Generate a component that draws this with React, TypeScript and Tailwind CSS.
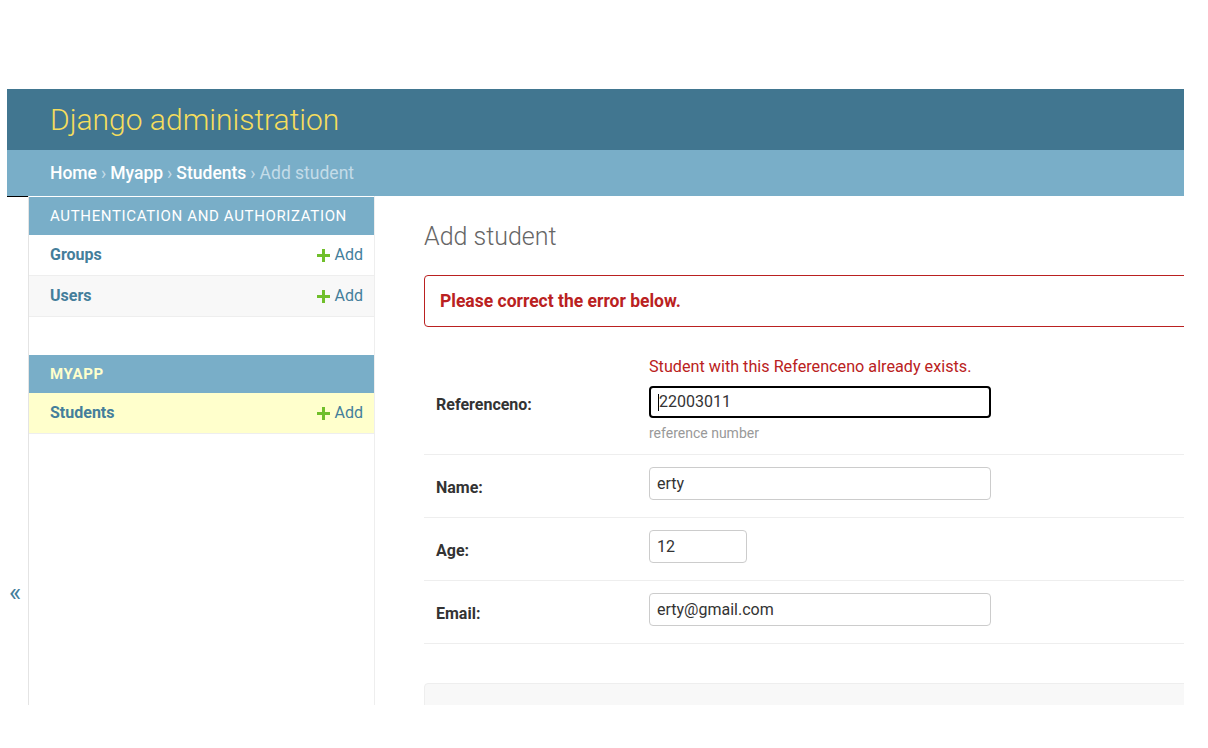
import React from "react";

const AddLink = () => (
  <span className="flex items-center gap-[5px] text-[16px] text-[#447e9b]">
    <svg width="13" height="13" viewBox="0 0 13 13">
      <path d="M5 0h3v5h5v3H8v5H5V8H0V5h5z" fill="#70bf2b" />
    </svg>
    Add
  </span>
);

const SideRow = ({ label, shade }: { label: string; shade?: string }) => (
  <div
    className={`h-[41px] flex items-center justify-between pl-[21px] pr-[11px] border-b border-[#eee] ${shade ?? "bg-white"}`}
  >
    <span className="text-[16px] font-bold text-[#447e9b]">{label}</span>
    <AddLink />
  </div>
);

const FormRow = ({
  label,
  value,
  short,
  focused,
  error,
  help,
}: {
  label: string;
  value: string;
  short?: boolean;
  focused?: boolean;
  error?: string;
  help?: string;
}) => (
  <div
    className={`flex items-center border-b border-[#eee] pl-[12px] ${
      error ? "pt-[12px] pb-[10px]" : "pt-[12px] pb-[17px]"
    }`}
  >
    <label className={`w-[213px] text-[16px] font-bold text-[#333] ${error ? "mt-[7px]" : "mt-[8px]"}`}>
      {label}
    </label>
    <div className="flex flex-col">
      {error && (
        <div className="text-[16.2px] text-[#ba2121] mb-[7px] -mt-[4px]">{error}</div>
      )}
      <div
        className={`flex items-center rounded-[4px] pl-[7px] text-[16px] text-[#333] ${
          short ? "w-[98px]" : "w-[342px]"
        } ${focused ? "h-[32px] border-2 border-black pl-[6px]" : "h-[33px] border border-[#ccc]"}`}
      >
        {focused && <span className="w-px h-[17px] bg-black" />}
        {value}
      </div>
      {help && <div className="text-[14px] text-[#999] mt-[5px]">{help}</div>}
    </div>
  </div>
);

export default function App() {
  return (
    <div className="bg-white w-[1208px] h-[748px] pt-[89px] pl-[7px] font-['Roboto',sans-serif]">
      <div className="w-[1177px] h-[616px] overflow-hidden flex flex-col">
        <div className="h-[61px] shrink-0 bg-[#417690] pl-[43px] flex items-center">
          <span className="text-[30px] font-light text-[#f5dd5d]">Django administration</span>
        </div>
        <div className="h-[46px] shrink-0 bg-[#79aec8] pl-[43px] pt-[1px] flex items-center text-[17.5px] font-medium text-white">
          Home<span className="mx-[4px] text-[#c4dce8] font-normal">›</span>Myapp
          <span className="mx-[4px] text-[#c4dce8] font-normal">›</span>Students
          <span className="mx-[4px] text-[#c4dce8] font-normal">›</span>
          <span className="text-[#c4dce8] font-normal">Add student</span>
        </div>
        <div className="flex flex-1 min-h-0">
          <div className="w-[22px] shrink-0 border-r border-[#e4e4e4] flex flex-col">
            <div className="h-[1px] bg-black" />
            <div className="pt-[380px] pl-[2px] text-[#447e9b] text-[26px] leading-[30px]">«</div>
          </div>
          <div className="w-[346px] shrink-0 border-r border-[#eee] pt-[1px]">
            <div className="h-[38px] bg-[#79aec8] pl-[21px] flex items-center text-[15px] tracking-[0.65px] text-white">
              AUTHENTICATION AND AUTHORIZATION
            </div>
            <SideRow label="Groups" />
            <SideRow label="Users" shade="bg-[#f8f8f8]" />
            <div className="h-[38px]" />
            <div className="h-[38px] bg-[#79aec8] pl-[21px] flex items-center text-[15px] font-bold tracking-[0.65px] text-[#ffffcc]">
              MYAPP
            </div>
            <SideRow label="Students" shade="bg-[#ffffcc]" />
          </div>
          <div className="w-[850px] shrink-0 pl-[49px] pt-[25px]">
            <h1 className="text-[25px] font-light text-[#666] leading-[32px]">Add student</h1>
            <div className="mt-[22px] h-[52px] border border-[#ba2121] rounded-[4px] pl-[15px] flex items-center text-[17.5px] font-bold text-[#ba2121]">
              Please correct the error below.
            </div>
            <div className="mt-[20px]">
              <FormRow
                label="Referenceno:"
                value="22003011"
                focused
                error="Student with this Referenceno already exists."
                help="reference number"
              />
              <FormRow label="Name:" value="erty" />
              <FormRow label="Age:" value="12" short />
              <FormRow label="Email:" value="erty@gmail.com" />
            </div>
            <div className="mt-[39px] h-[60px] bg-[#f8f8f8] border border-[#eee] rounded-[4px]" />
          </div>
        </div>
      </div>
    </div>
  );
}
